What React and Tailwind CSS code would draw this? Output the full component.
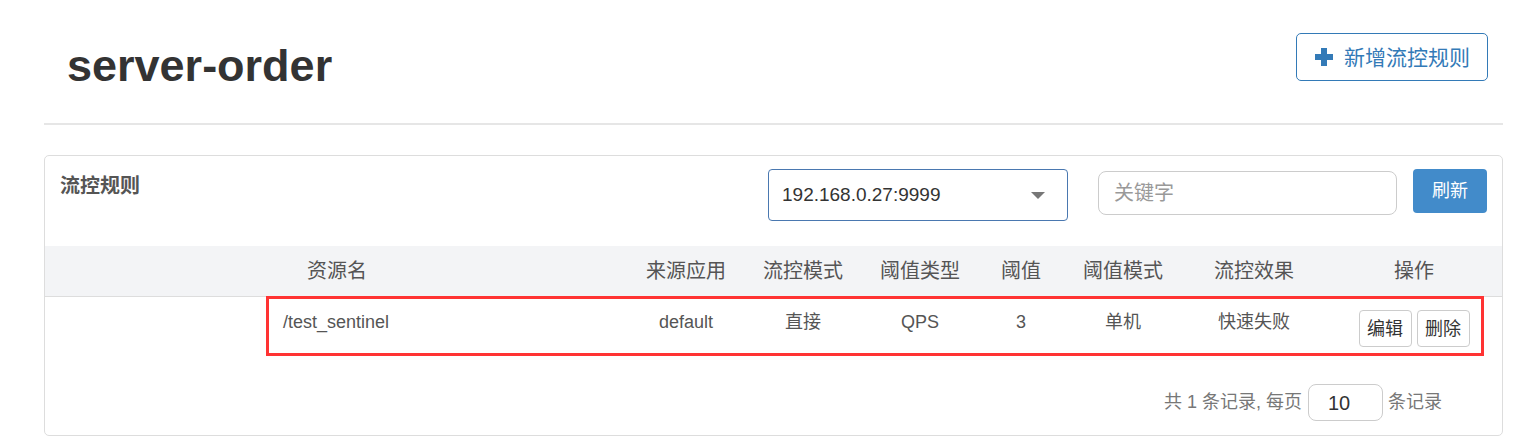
import React from "react";

const font = { fontFamily: '"Liberation Sans", "Noto Sans CJK SC", sans-serif' };

const cols = [
  { w: "w-[221px]" },
  { w: "w-[364px]" },
  { w: "w-[112px]" },
  { w: "w-[122px]" },
  { w: "w-[112px]" },
  { w: "w-[90px]" },
  { w: "w-[114px]" },
  { w: "w-[148px]" },
  { w: "w-[172px]" },
];

export default function App() {
  return (
    <div className="w-[1513px] h-[447px] overflow-hidden bg-white" style={font}>
      <div className="ml-[44px] w-[1459px]">
        {/* Page header */}
        <div className="flex justify-between h-[125px] border-b-2 border-[#e6e6e6]">
          <h1 className="pl-[23px] pt-[43px] text-[45px] font-bold leading-none text-[#333]">server-order</h1>
          <button className="mt-[33px] mr-[15px] flex h-[48px] w-[192px] items-center rounded-[5px] border border-[#337ab7] bg-white pl-[18px] text-[21px] text-[#337ab7]">
            <svg width="18" height="18" viewBox="0 0 18 18" className="mr-[11px]">
              <rect x="6" y="0" width="6" height="18" fill="#337ab7" />
              <rect x="0" y="6" width="18" height="6" fill="#337ab7" />
            </svg>
            <span className="leading-none">新增流控规则</span>
          </button>
        </div>

        {/* Card */}
        <div className="mt-[30px] h-[281px] rounded-[5px] border border-[#ddd]">
          <div className="flex h-[90px] items-start">
            <div className="pl-[15px] pt-[18px] text-[20px] font-bold leading-[24px] text-[#555]">流控规则</div>
            <div className="flex-1" />
            <div className="mt-[13px] flex h-[52px] w-[300px] items-center justify-between rounded-[4px] border border-[#4a78b0] pl-[13px] pr-[22px] text-[19px] text-[#333]">
              <span>192.168.0.27:9999</span>
              <svg width="14" height="7" viewBox="0 0 14 7">
                <polygon points="0,0 14,0 7,7" fill="#777" />
              </svg>
            </div>
            <div className="ml-[30px] mt-[15px] flex h-[44px] w-[299px] items-center rounded-[8px] border border-[#ccc] pl-[15px] text-[20px] text-[#999]">
              关键字
            </div>
            <button className="ml-[16px] mr-[15px] mt-[13px] h-[44px] w-[74px] rounded-[4px] bg-[#428bca] text-[18px] text-white">
              刷新
            </button>
          </div>

          {/* Table header */}
          <div className="flex h-[51px] items-center border-b border-[#ddd] bg-[#f3f4f6] text-[20px] text-[#555]">
            <div className={cols[0].w} />
            <div className={`${cols[1].w} pl-[41px]`}>资源名</div>
            <div className={`${cols[2].w} text-center`}>来源应用</div>
            <div className={`${cols[3].w} text-center`}>流控模式</div>
            <div className={`${cols[4].w} text-center`}>阈值类型</div>
            <div className={`${cols[5].w} text-center`}>阈值</div>
            <div className={`${cols[6].w} text-center`}>阈值模式</div>
            <div className={`${cols[7].w} text-center`}>流控效果</div>
            <div className={`${cols[8].w} text-center`}>操作</div>
          </div>

          {/* Row */}
          <div className="relative flex h-[58px] items-start text-[18px] leading-[26px] text-[#555]">
            <div className={cols[0].w} />
            <div className={`${cols[1].w} pl-[17px] pt-[12px]`}>/test_sentinel</div>
            <div className={`${cols[2].w} pt-[12px] text-center`}>default</div>
            <div className={`${cols[3].w} pt-[12px] text-center`}>直接</div>
            <div className={`${cols[4].w} pt-[12px] text-center`}>QPS</div>
            <div className={`${cols[5].w} pt-[12px] text-center`}>3</div>
            <div className={`${cols[6].w} pt-[12px] text-center`}>单机</div>
            <div className={`${cols[7].w} pt-[12px] text-center`}>快速失败</div>
            <div className={`${cols[8].w} flex justify-center gap-[5px] pt-[13px]`}>
              <button className="h-[37px] w-[53px] rounded-[4px] border border-[#ccc] bg-white text-[18px] text-[#333]">编辑</button>
              <button className="h-[37px] w-[53px] rounded-[4px] border border-[#ccc] bg-white text-[18px] text-[#333]">删除</button>
            </div>
            <div className="pointer-events-none absolute left-[221px] top-[-1px] h-[60px] w-[1218px] border-[3px] border-[#ff3333]" />
          </div>

          {/* Pagination */}
          <div className="mt-[29px] flex items-center justify-end pr-[60px] text-[18px] text-[#777]">
            <span>共 1 条记录, 每页</span>
            <div className="ml-[6px] mr-[5px] flex h-[37px] w-[75px] items-center rounded-[8px] border border-[#ccc] pl-[19px] text-[20px] text-[#333]">
              10
            </div>
            <span>条记录</span>
          </div>
        </div>
      </div>
    </div>
  );
}
